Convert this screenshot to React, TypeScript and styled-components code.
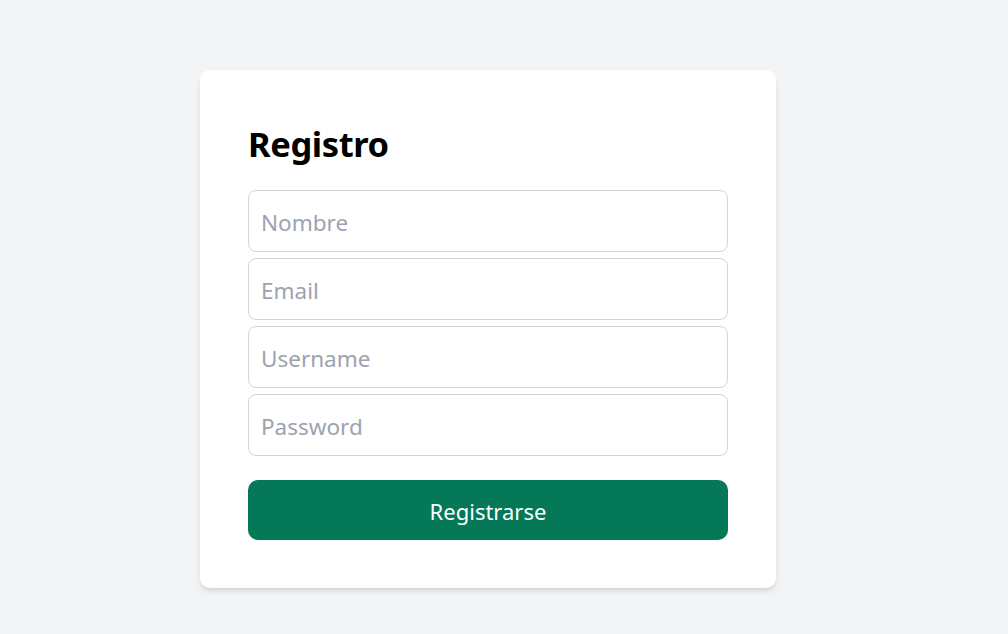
import React from "react";
import styled, { createGlobalStyle } from "styled-components";

const Global = createGlobalStyle`
  html, body { margin: 0; padding: 0; background: #f3f4f6; }
  body { font-family: "Noto Sans", "Open Sans", sans-serif; }
  * { box-sizing: border-box; }
`;

const Page = styled.div`
  min-height: 634px;
  padding: 70px 0 0 200px;
`;

const Card = styled.form`
  width: 576px;
  background: #ffffff;
  border-radius: 10px;
  padding: 48px;
  box-shadow: 0 4px 6px -1px rgba(0,0,0,0.1), 0 2px 4px -2px rgba(0,0,0,0.1);
  display: flex;
  flex-direction: column;
`;

const Title = styled.h2`
  margin: 2px 0 22px 0;
  font-size: 34.5px;
  line-height: 48px;
  font-weight: 700;
  color: #000;
  letter-spacing: -0.4px;
`;

const Fields = styled.div`
  display: flex;
  flex-direction: column;
  gap: 6px;
`;

const Input = styled.input`
  width: 100%;
  height: 62px;
  padding: 2px 12px 0;
  border: 1px solid #d1d5db;
  border-radius: 8px;
  font-family: inherit;
  font-size: 22.5px;
  color: #111827;
  background: #fff;
  outline: none;
  &::placeholder { color: #9ca3af; }
`;

const Button = styled.button`
  margin-top: 24px;
  height: 60px;
  width: 100%;
  border: none;
  border-radius: 10px;
  background: #047857;
  color: #fff;
  font-family: inherit;
  font-size: 22px;
  padding-top: 2px;
  cursor: pointer;
`;

export default function App() {
  return (
    <>
      <Global />
      <Page>
        <Card onSubmit={(e) => e.preventDefault()}>
          <Title>Registro</Title>
          <Fields>
            <Input placeholder="Nombre" />
            <Input placeholder="Email" type="email" />
            <Input placeholder="Username" />
            <Input placeholder="Password" type="password" />
          </Fields>
          <Button type="submit">Registrarse</Button>
        </Card>
      </Page>
    </>
  );
}
